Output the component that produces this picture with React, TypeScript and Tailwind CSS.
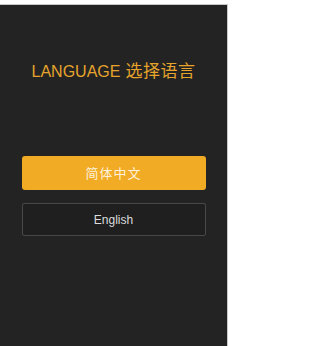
import React from "react";

export default function App() {
  return (
    <div className="w-[231px] h-[346px] bg-white pt-[4px] overflow-hidden">
      <div className="w-[228px] h-[342px] bg-[#232323] border-t border-r border-[#c8c8c8] flex flex-col items-center font-['Liberation_Sans','Noto_Sans_CJK_SC',sans-serif]">
        <div className="mt-[56px] h-[26px] flex items-baseline text-[#e6a42c] text-[16px] leading-none whitespace-nowrap">
          <span>LANGUAGE</span>
          <span className="ml-[5px] text-[17px] tracking-[0.5px] font-['Noto_Sans_CJK_SC',sans-serif]">
            选择语言
          </span>
        </div>
        <button className="mt-[69px] w-[184px] h-[34px] rounded-[3px] bg-[#f2ab24] text-[#fdf1dc] text-[13px] tracking-[1px] flex items-center justify-center font-['Noto_Sans_CJK_SC',sans-serif]">
          简体中文
        </button>
        <button className="mt-[13px] w-[184px] h-[33px] rounded-[2px] border border-[#484848] bg-[#1f1f1f] text-[#dcdcdc] text-[12px] flex items-center justify-center">
          English
        </button>
      </div>
    </div>
  );
}
